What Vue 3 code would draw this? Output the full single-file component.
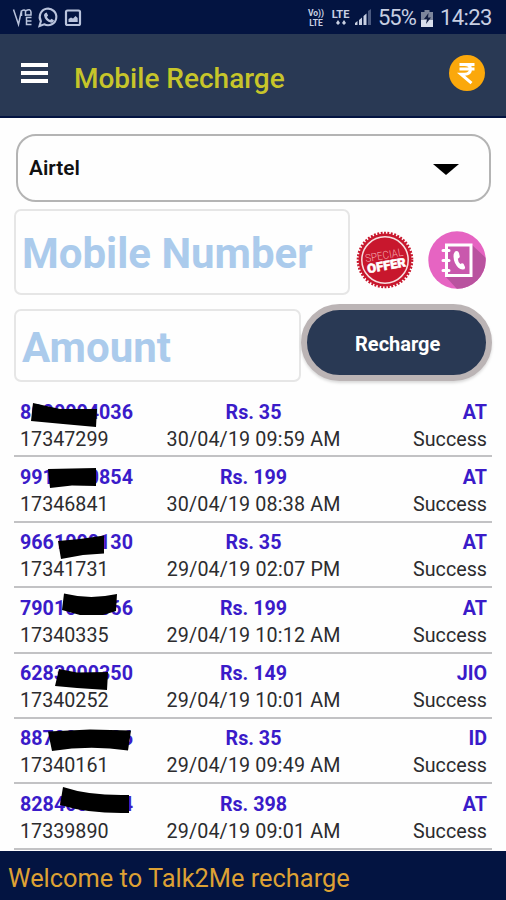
<template>
  <div class="screen">
    <div class="status">
      <svg class="status__left" width="84" height="34" viewBox="0 0 84 34" fill="none" stroke="#b9c3dc">
        <path d="M13.500 9.500l5 15 3-14M21.500 16v-5q3-2 4 0v5M25.500 11q5-3 5.500 1v3h-5M31.500 17.500h-5v3.500h5M26.500 21v3.500h5" stroke-width="1.500" />
        <path d="M39.500 26l1.400-4.800a8.300 8.300 0 1 1 3.300 3.100z" stroke-width="2.100" />
        <path d="M45 13.200l1.600-.6 1.500 3-1.200 1.300q1 2 3.200 3l1.300-1.200 2.600 1.500q-.4 2.600-2.800 2.500-6.300-1.600-7.300-7.800z" fill="#b9c3dc" stroke="none" />
        <rect x="66" y="10.500" width="14" height="14.500" rx="1.500" stroke-width="2.200" />
        <path d="M68.500 22v-3l2.500-1.500 2 1 2.500-2.500 2.200 2v4z" fill="#b9c3dc" stroke="none" />
      </svg>
      <div class="status__right">
        <span class="volte"><span>Vo))</span><span>LTE</span></span>
        <span class="lte">
          <span>LTE</span>
          <svg width="12" height="6" viewBox="0 0 12 6" fill="#c8cfe2">
            <path d="M1 3l2-3 2 3-2 2zM7 3l2-3 2 3-2 2z" />
          </svg>
        </span>
        <svg class="signal" width="18" height="18" viewBox="0 0 18 18">
          <path d="M1 17v-2l2.500-2v4zM5 17v-5l3-2.500v7.500zM9.500 17v-9l3-2.500v11.500z" fill="#c8cfe2" />
          <path d="M14 17v-14l3-2v16z" fill="#4c5a80" />
        </svg>
        <span class="status__text status__text--battery">55%</span>
        <svg class="battery" width="12" height="17" viewBox="0 0 12 17">
          <path d="M3.500 0h5v2h3.500v15h-12v-15h3.500z" fill="#7c859b" />
          <path d="M0 10h12v7h-12z" fill="#d9dfec" />
          <path d="M7.500 3l-4.500 6h3l-1 5 5-6.500h-3z" fill="#101c40" />
        </svg>
        <span class="status__text status__text--time">14:23</span>
      </div>
    </div>

    <header class="appbar">
      <div class="menu"><i></i><i></i><i></i></div>
      <h1 class="appbar__title">Mobile Recharge</h1>
      <svg class="coin" width="38" height="38" viewBox="0 0 38 38">
        <circle cx="19" cy="19" r="18" fill="#fba80b" />
        <path d="M11.500 10.500h15M11.500 15h15M12 10.500h4.500q6 0 6 4.800 0 4.900-6 4.900h-3.500l10.500 9" fill="none" stroke="#fff" stroke-width="3" />
      </svg>
    </header>

    <main class="content">
      <div class="select">
        <span class="select__value">Airtel</span>
        <svg class="select__caret" width="26" height="11" viewBox="0 0 26 11"><path d="M0 0h26l-13 11z" /></svg>
      </div>

      <div class="line line--number">
        <div class="field field--number"><span>Mobile Number</span></div>
        <svg class="offer" width="58" height="58" viewBox="0 0 58 58">
          <circle cx="29" cy="29" r="26.500" fill="#c8172d" />
          <circle cx="29" cy="29" r="27" fill="none" stroke="#c8172d" stroke-width="2.600" stroke-dasharray="1.900 1.500" />
          <circle cx="29" cy="29" r="23.200" fill="none" stroke="#f7dfe0" stroke-width="1.500" />
          <g transform="rotate(-10 29 29)" text-anchor="middle">
            <text class="offer__top" x="29" y="28" textLength="38" lengthAdjust="spacingAndGlyphs">SPECIAL</text>
            <text class="offer__bottom" x="29.500" y="39" textLength="39" lengthAdjust="spacingAndGlyphs">OFFER</text>
          </g>
        </svg>
        <svg class="contacts" width="58" height="58" viewBox="0 0 58 58">
          <defs>
            <clipPath id="disc"><circle cx="29" cy="29" r="28.700" /></clipPath>
          </defs>
          <g clip-path="url(#disc)">
            <path d="M0 0h58v58H0z" fill="#e664c2" />
            <path d="M43 13l15 14v31H29L17 45z" fill="#b9539f" />
          </g>
          <rect x="18.500" y="14" width="24.500" height="30.500" fill="#c958ad" stroke="#fff" stroke-width="3" />
          <path d="M15 19.500h6M15 29.500h6M15 39.500h6" stroke="#fff" stroke-width="3" stroke-linecap="round" />
          <path d="M27 20.500q3-1.500 4 1.500l.8 3.500q0 1.500-2 2.200.3 3.500 2.500 5.300 2-1.500 3.200-.2l1.500 3.200q.5 2.500-2.500 2.500-4.500-.5-7.500-6.500-3-7.500 0-11.500z" fill="#fff" />
        </svg>
      </div>

      <div class="line line--amount">
        <div class="field field--amount"><span>Amount</span></div>
        <button class="recharge" type="button"><span>Recharge</span></button>
      </div>

      <div class="history">
        <div v-for="item in history" :key="item.id" class="entry">
          <div class="entry__main">
            <span class="entry__phone">
              {{ item.phone }}
              <svg class="entry__mask" width="116" height="40" viewBox="0 0 116 40">
                <path :d="item.mask" />
              </svg>
            </span>
            <span class="entry__amount">Rs. {{ item.amount }}</span>
            <span class="entry__operator">{{ item.operator }}</span>
          </div>
          <div class="entry__sub">
            <span>{{ item.id }}</span>
            <span class="entry__date">{{ item.date }}</span>
            <span class="entry__status">Success</span>
          </div>
        </div>
      </div>
    </main>

    <footer class="footer"><span>Welcome to Talk2Me recharge</span></footer>
  </div>
</template>

<script setup>
// hidden digits are stored as zeros, the mask path is painted over them
const history = [
  { id: '17347299', phone: '8000004036', amount: 35, operator: 'AT', date: '30/04/19 09:59 AM', mask: 'M13 10L40 16H77L76 34L43 31L11 28z' },
  { id: '17346841', phone: '9910000854', amount: 199, operator: 'AT', date: '30/04/19 08:38 AM', mask: 'M28 11L76 10V28L52 27.500L30 30z' },
  { id: '17341731', phone: '9661000130', amount: 35, operator: 'AT', date: '29/04/19 02:07 PM', mask: 'M38 18L60 16L84 12.500V30.500L63 32L41 36z' },
  { id: '17340335', phone: '7901000066', amount: 199, operator: 'AT', date: '29/04/19 10:12 AM', mask: 'M44 4.500Q70 11 97 5L96 22L83 26H60L42 21z' },
  { id: '17340252', phone: '6283000350', amount: 149, operator: 'JIO', date: '29/04/19 10:01 AM', mask: 'M39 15L57 18.500L88 18L87 36L57 34L35 32z' },
  { id: '17340161', phone: '8870000006', amount: 35, operator: 'ID', date: '29/04/19 09:49 AM', mask: 'M28 12.500L70 10.500L111 11.500L108 31.500Q70 26 32 32z' },
  { id: '17339890', phone: '8284000004', amount: 398, operator: 'AT', date: '29/04/19 09:01 AM', mask: 'M43 2Q70 11 109 10V28Q70 29 40 20z' },
]
</script>

<style>
body {
  margin: 0;
  background: #fff;
}
</style>

<style scoped>
.screen {
  display: flex;
  flex-direction: column;
  width: 506px;
  height: 900px;
  overflow: hidden;
  background: #fefefe;
  font-family: Roboto, "Liberation Sans", sans-serif;
  white-space: nowrap;
}

.status {
  display: flex;
  justify-content: space-between;
  height: 34px;
  background: #031441;
  color: #c8cfe2;
}

.status__right {
  display: flex;
  align-items: center;
  padding-right: 14px;
}

.volte,
.lte {
  display: flex;
  flex-direction: column;
  align-items: center;
  font-weight: 700;
}

.volte {
  width: 18px;
  margin: 1px 6px 0 0;
  font-size: 8.500px;
  line-height: 10px;
}

.lte {
  width: 19px;
  margin-right: 4px;
  font-size: 11px;
  line-height: 11px;
}

.signal {
  margin-right: 6px;
}

.status__text {
  font-size: 22px;
  line-height: 34px;
  padding-top: 2px;
}

.status__text--battery {
  width: 38px;
  letter-spacing: -1px;
}

.status__text--time {
  width: 52px;
  letter-spacing: -0.6px;
}

.battery {
  margin: 2px 7px 0 5px;
}

.appbar {
  display: flex;
  align-items: center;
  box-sizing: border-box;
  height: 84px;
  padding: 0 20px 0 21px;
  border-bottom: 2px solid #031441;
  background: #293954;
}

.menu {
  display: flex;
  flex-direction: column;
  gap: 4px;
  width: 27px;
  margin-bottom: 4px;
}

.menu i {
  height: 4px;
  background: #fff;
}

.appbar__title {
  flex: 1;
  margin: 7px 0 0 26px;
  color: #c7c52a;
  font-size: 28px;
  font-weight: 500;
  line-height: 36px;
}

.coin {
  margin-bottom: 4px;
}

.content {
  display: flex;
  flex: 1;
  flex-direction: column;
  min-height: 0;
  padding: 16px 14px 0;
}

.select {
  display: flex;
  align-items: center;
  justify-content: space-between;
  box-sizing: border-box;
  height: 68px;
  margin: 0 1px 0 2px;
  padding: 0 30px 0 11px;
  border: 2px solid #b4b4b4;
  border-radius: 20px;
}

.select__value {
  color: #111;
  font-size: 20.800px;
  font-weight: 600;
}

.select__caret {
  margin-top: 2px;
}

.line {
  display: flex;
  align-items: center;
}

.line--number {
  margin-top: 7px;
}

.line--amount {
  align-items: flex-start;
  margin-top: 9px;
}

.field {
  display: flex;
  align-items: center;
  box-sizing: border-box;
  padding: 3px 0 0 6px;
  border: 2px solid #e6e6e6;
  border-radius: 7px;
  color: #abcbec;
  font-size: 42px;
  font-weight: 700;
}

.field--number {
  width: 336px;
  height: 86px;
}

.field--amount {
  width: 288px;
  height: 73px;
  margin-top: 5px;
}

.offer {
  margin: 16px 0 0 6px;
}

.contacts {
  margin: 15px 0 0 14px;
}

.offer__top {
  fill: #f3a9ae;
  font-size: 11px;
  font-weight: 300;
}

.offer__bottom {
  fill: #fff;
  stroke: #fff;
  stroke-width: 0.5px;
  font-size: 12.500px;
  font-weight: 900;
}

.recharge {
  box-sizing: border-box;
  width: 191px;
  height: 77px;
  margin: 0;
  padding: 2px 0 0 2px;
  border: 6px solid #bbb4b5;
  border-radius: 39px;
  background: #293954;
  box-shadow: 0 2px 3px rgba(0, 0, 0, 0.15);
  color: #fff;
  font-family: inherit;
  font-size: 20px;
  font-weight: 700;
}

.history {
  margin-top: 10px;
}

.entry {
  box-sizing: border-box;
  height: 65.400px;
  padding: 6.500px 5px 0 6px;
  border-bottom: 2px solid #c2c2c4;
  font-size: 19.700px;
  line-height: 27px;
}

.entry__main,
.entry__sub {
  display: grid;
  grid-template-columns: 112px 1fr 112px;
}

.entry__main {
  color: #3a1bc9;
  font-weight: 700;
}

.entry__sub {
  color: #2c2c2e;
}

.entry__phone {
  position: relative;
}

.entry__mask {
  position: absolute;
  top: -6px;
  left: 0;
}

.entry__amount,
.entry__date {
  text-align: center;
}

.entry__date {
  letter-spacing: 0.15px;
}

.entry__operator,
.entry__status {
  text-align: right;
}

.footer {
  display: flex;
  align-items: center;
  box-sizing: border-box;
  height: 49px;
  padding: 4px 0 0 8px;
  background: #031441;
  color: #dda134;
  font-size: 25.400px;
}
</style>
